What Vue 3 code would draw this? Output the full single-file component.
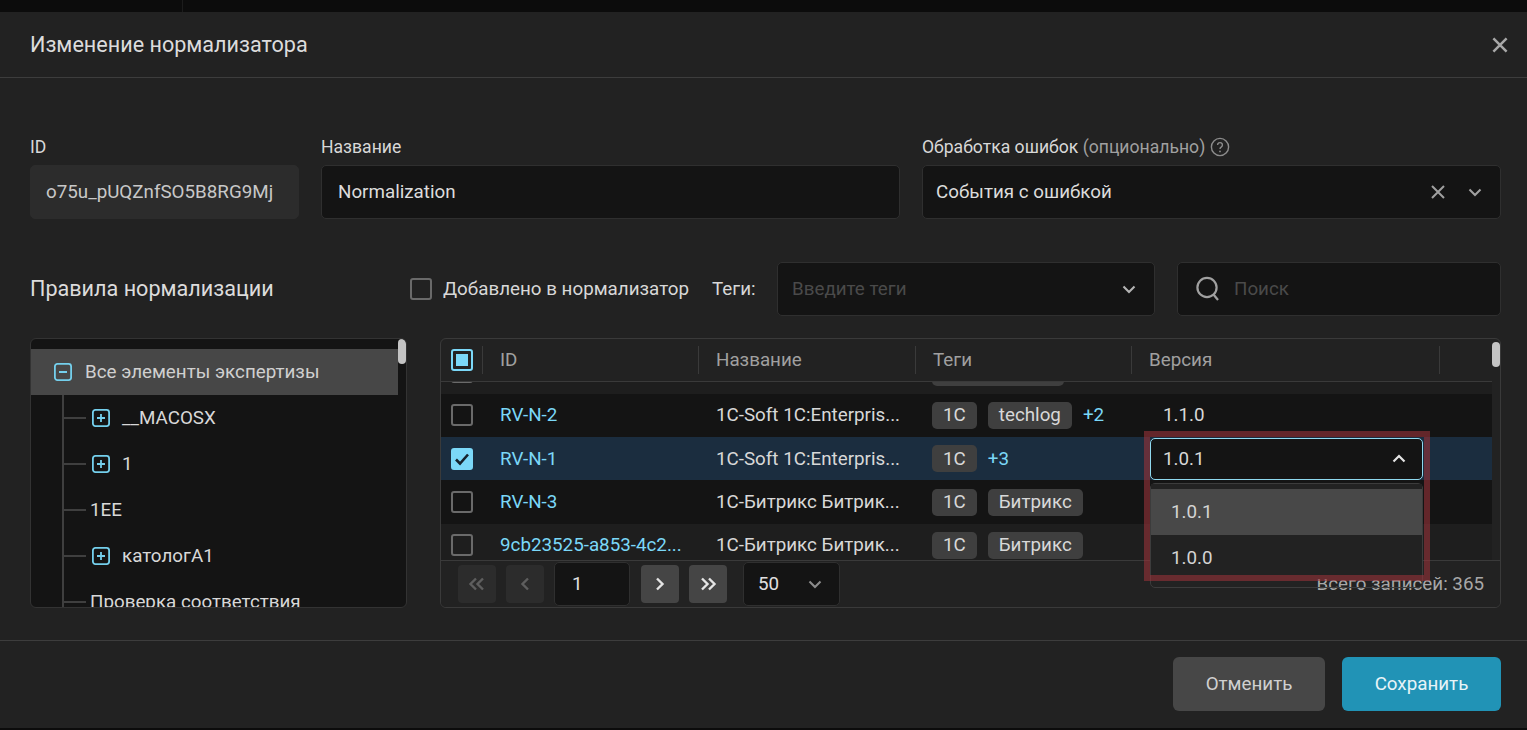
<script setup>
const treeItems = [
  { label: '__MACOSX', expandable: true },
  { label: '1', expandable: true },
  { label: '1EE', expandable: false },
  { label: 'катологА1', expandable: true },
  { label: 'Проверка соответствия', expandable: false }
]

// the first row is scrolled almost out of view, only the chip and checkbox bottoms show
const rows = [
  { key: 'scrolled', id: '', name: '', tags: [], more: '', version: '', clipped: true },
  { key: 'n2', id: 'RV-N-2', name: '1C-Soft 1C:Enterpris...', tags: ['1C', 'techlog'], more: '+2', version: '1.1.0' },
  { key: 'n1', id: 'RV-N-1', name: '1C-Soft 1C:Enterpris...', tags: ['1C'], more: '+3', version: '1.0.1', selected: true },
  { key: 'n3', id: 'RV-N-3', name: '1C-Битрикс Битрик...', tags: ['1C', 'Битрикс'], more: '', version: '' },
  { key: 'uuid', id: '9cb23525-a853-4c2...', name: '1C-Битрикс Битрик...', tags: ['1C', 'Битрикс'], more: '', version: '' }
]

const columns = ['ID', 'Название', 'Теги', 'Версия']
</script>

<template>
  <div class="page">
    <div class="top-strip"><span class="top-divider"></span></div>
    <div class="modal">
      <header class="modal-header">
        <h1 class="modal-title">Изменение нормализатора</h1>
        <svg class="close-icon" width="18" height="18" viewBox="0 0 18 18" fill="none">
          <path d="M2.4 2.4l13.2 13.2M15.6 2.4L2.4 15.6" stroke="#a8a8a8" stroke-width="2.5" />
        </svg>
      </header>

      <div class="modal-body">
        <div class="form-grid">
          <div class="field">
            <label class="field-label">ID</label>
            <div class="input input-readonly">o75u_pUQZnfSO5B8RG9Mj</div>
          </div>
          <div class="field">
            <label class="field-label">Название</label>
            <div class="input">Normalization</div>
          </div>
          <div class="field">
            <label class="field-label">
              Обработка ошибок <span class="optional">(опционально)</span>
              <svg class="help-icon" width="20" height="20" viewBox="0 0 20 20" fill="none">
                <circle cx="10" cy="10" r="8.6" stroke="#8c8c8c" stroke-width="1.4" />
                <path d="M7.6 8a2.4 2.4 0 1 1 3.6 2.1c-.8.5-1.2.9-1.2 1.8" stroke="#8c8c8c" stroke-width="1.4" />
                <circle cx="10" cy="14.4" r=".9" fill="#8c8c8c" />
              </svg>
            </label>
            <div class="input input-select">
              <span>События с ошибкой</span>
              <span class="select-icons">
                <svg width="14" height="14" viewBox="0 0 14 14" fill="none">
                  <path d="M1 1l12 12M13 1L1 13" stroke="#a0a0a0" stroke-width="2" />
                </svg>
                <svg width="14" height="10" viewBox="0 0 14 10" fill="none">
                  <path d="M1.5 2.5L7 8l5.5-5.5" stroke="#a0a0a0" stroke-width="2.1" />
                </svg>
              </span>
            </div>
          </div>
        </div>

        <div class="rules-bar">
          <h2 class="rules-title">Правила нормализации</h2>
          <span class="checkbox"></span>
          <span class="rules-check-label">Добавлено в нормализатор</span>
          <span class="rules-tags-label">Теги:</span>
          <div class="input input-select tags-select">
            <span class="placeholder">Введите теги</span>
            <svg width="14" height="10" viewBox="0 0 14 10" fill="none">
              <path d="M1.5 2.5L7 8l5.5-5.5" stroke="#b4b4b4" stroke-width="2.1" />
            </svg>
          </div>
          <div class="input search">
            <svg width="26" height="26" viewBox="0 0 26 26" fill="none">
              <circle cx="12" cy="11.5" r="9.6" stroke="#a0a0a0" stroke-width="2.2" />
              <path d="M18.5 18.5l4.5 5.5" stroke="#a0a0a0" stroke-width="2.2" />
            </svg>
            <span class="placeholder">Поиск</span>
          </div>
        </div>

        <div class="panels">
          <div class="tree">
            <div class="tree-scroll">
              <div class="tree-root">
                <span class="tree-toggle">
                  <svg width="18" height="18" viewBox="0 0 18 18" fill="none">
                    <rect x=".9" y=".9" width="16.2" height="16.2" rx="2.5" stroke="#74cfec" stroke-width="1.8" />
                    <path d="M5 9h8" stroke="#74cfec" stroke-width="1.8" />
                  </svg>
                </span>
                <span>Все элементы экспертизы</span>
              </div>
              <ul class="tree-list">
                <li v-for="item in treeItems" :key="item.label" class="tree-item">
                  <svg v-if="item.expandable" class="tree-plus" width="18" height="18" viewBox="0 0 18 18" fill="none">
                    <rect x=".9" y=".9" width="16.2" height="16.2" rx="2.5" stroke="#74cfec" stroke-width="1.8" />
                    <path d="M5 9h8M9 5v8" stroke="#74cfec" stroke-width="1.8" />
                  </svg>
                  <span>{{ item.label }}</span>
                </li>
              </ul>
            </div>
            <div class="scrollbar"><span class="thumb"></span></div>
          </div>

          <div class="table">
            <div class="table-main">
              <div class="table-head">
                <div class="head-check">
                  <span class="checkbox checkbox-mixed"><i></i></span>
                </div>
                <div v-for="col in columns" :key="col" class="head-cell">{{ col }}</div>
                <div class="head-cell"></div>
              </div>
              <div class="table-body">
                <div
                  v-for="row in rows"
                  :key="row.key"
                  class="table-row"
                  :class="{ 'row-selected': row.selected }"
                >
                  <div class="cell-check">
                    <span v-if="row.selected" class="checkbox checkbox-on">
                      <svg width="16" height="14" viewBox="0 0 16 14" fill="none">
                        <path d="M2 7.5l4 4 8-9" stroke="#16222c" stroke-width="2.6" />
                      </svg>
                    </span>
                    <span v-else class="checkbox"></span>
                  </div>
                  <div class="cell cell-id">{{ row.id }}</div>
                  <div class="cell">{{ row.name }}</div>
                  <div class="cell cell-tags">
                    <span v-if="row.clipped" class="tag tag-clipped"></span>
                    <span v-for="tag in row.tags" :key="tag" class="tag">{{ tag }}</span>
                    <span v-if="row.more" class="more">{{ row.more }}</span>
                  </div>
                  <div class="cell cell-version">
                    <div v-if="row.selected" class="version-select">
                      <span>{{ row.version }}</span>
                      <svg width="14" height="10" viewBox="0 0 14 10" fill="none">
                        <path d="M1.5 7.5L7 2l5.5 5.5" stroke="#e4e4e4" stroke-width="2.2" />
                      </svg>
                    </div>
                    <span v-else>{{ row.version }}</span>
                  </div>
                </div>
              </div>
            </div>
            <div class="scrollbar table-scrollbar"><span class="thumb"></span></div>

            <div class="table-footer">
              <button class="page-btn page-btn-off">
                <svg width="18" height="14" viewBox="0 0 18 14" fill="none">
                  <path d="M8 1.5L2.5 7 8 12.5M15 1.5L9.5 7l5.5 5.5" stroke="#5e5e5e" stroke-width="2.4" />
                </svg>
              </button>
              <button class="page-btn page-btn-off">
                <svg width="10" height="14" viewBox="0 0 10 14" fill="none">
                  <path d="M8 1.5L2.5 7 8 12.5" stroke="#5e5e5e" stroke-width="2.4" />
                </svg>
              </button>
              <div class="page-input">1</div>
              <button class="page-btn page-next">
                <svg width="10" height="14" viewBox="0 0 10 14" fill="none">
                  <path d="M2 1.5L7.5 7 2 12.5" stroke="#e4e4e4" stroke-width="2.4" />
                </svg>
              </button>
              <button class="page-btn">
                <svg width="18" height="14" viewBox="0 0 18 14" fill="none">
                  <path d="M3 1.5L8.5 7 3 12.5M10 1.5L15.5 7 10 12.5" stroke="#e4e4e4" stroke-width="2.4" />
                </svg>
              </button>
              <div class="page-size">
                <span>50</span>
                <svg width="14" height="10" viewBox="0 0 14 10" fill="none">
                  <path d="M1.5 2.5L7 8l5.5-5.5" stroke="#8c8c8c" stroke-width="2.1" />
                </svg>
              </div>
              <span class="total">Всего записей: 365</span>
            </div>

            <div class="version-menu">
              <div class="version-options">
                <div class="version-option option-active">1.0.1</div>
                <div class="version-option">1.0.0</div>
              </div>
            </div>
            <div class="highlight"></div>
          </div>
        </div>
      </div>

      <footer class="modal-footer">
        <button class="btn btn-cancel">Отменить</button>
        <button class="btn btn-save">Сохранить</button>
      </footer>
    </div>
    <div class="bottom-strip"></div>
  </div>
</template>

<style>
html,
body {
  margin: 0;
  background: #0c0c0c;
}
</style>

<style scoped>
.page {
  display: flex;
  flex-direction: column;
  width: 1527px;
  height: 730px;
  overflow: hidden;
  font-family: Roboto, "Liberation Sans", sans-serif;
  font-size: 18.8px;
  color: #e0e0e0;
  background: #0c0c0c;
}

.top-strip {
  height: 12px;
  padding-left: 182px;
  flex-shrink: 0;
}

.top-divider {
  display: block;
  width: 1px;
  height: 12px;
  background: #1c1c1c;
}

.bottom-strip {
  height: 2px;
  flex-shrink: 0;
}

.modal {
  flex: 1;
  display: flex;
  flex-direction: column;
  background: #222222;
}

.modal-header {
  display: flex;
  align-items: center;
  justify-content: space-between;
  height: 65px;
  padding: 0 18px 0 30px;
  border-bottom: 1px solid #3d3d3d;
  flex-shrink: 0;
}

.modal-title {
  margin: 0;
  font-size: 21.6px;
  font-weight: 400;
  color: #dcdcdc;
}

.modal-body {
  flex: 1;
  padding: 58px 26px 32px 30px;
}

.form-grid {
  display: grid;
  grid-template-columns: 269px 579px 579px;
  gap: 22px;
}

.field-label {
  display: block;
  height: 19px;
  padding-top: 1px;
  line-height: 20px;
  margin-bottom: 9px;
  font-size: 17.6px;
  color: #d8d8d8;
  white-space: nowrap;
}

.optional {
  color: #a0a0a0;
}

.help-icon {
  margin-left: 5px;
  vertical-align: -4px;
}

.input {
  display: flex;
  align-items: center;
  box-sizing: border-box;
  height: 54px;
  padding: 0 16px;
  background: #141414;
  border: 1px solid #2f2f2f;
  border-radius: 5px;
  color: #dcdcdc;
}

.input-readonly {
  padding-left: 15px;
  background: #2c2c2c;
  border-color: #2c2c2c;
  color: #c8c8c8;
  white-space: nowrap;
}

.input-select {
  justify-content: space-between;
  padding-left: 13px;
  padding-right: 18px;
}

.select-icons {
  display: flex;
  align-items: center;
  gap: 23px;
}

.rules-bar {
  display: flex;
  align-items: center;
  margin-top: 43px;
  height: 54px;
}

.rules-title {
  width: 380px;
  margin: 0 0 2px;
  font-size: 21.6px;
  font-weight: 400;
  color: #dcdcdc;
  flex-shrink: 0;
}

.checkbox {
  display: inline-flex;
  align-items: center;
  justify-content: center;
  box-sizing: border-box;
  width: 22px;
  height: 22px;
  border: 2px solid #6a6a6a;
  border-radius: 3px;
  flex-shrink: 0;
}

.checkbox-on {
  background: #7bd8f8;
  border-color: #7bd8f8;
}

.checkbox-mixed {
  border-color: #7bd8f8;
}

.checkbox-mixed i {
  display: block;
  width: 12px;
  height: 12px;
  background: #7bd8f8;
}

.rules-check-label {
  width: 247px;
  margin-left: 11px;
  white-space: nowrap;
  color: #d8d8d8;
}

.rules-tags-label {
  width: 44px;
  margin-left: 22px;
  margin-right: 21px;
  color: #d8d8d8;
}

.tags-select {
  width: 378px;
  padding-left: 14px;
  padding-right: 18px;
}

.placeholder {
  color: #4a4a4a;
}

.search {
  width: 324px;
  margin-left: 22px;
  gap: 13px;
  padding-left: 17px;
}

.panels {
  display: flex;
  gap: 33px;
  margin-top: 22px;
  height: 270px;
}

.tree {
  display: flex;
  width: 377px;
  box-sizing: border-box;
  background: #141414;
  border: 1px solid #333333;
  border-radius: 6px;
  overflow: hidden;
}

.tree-scroll {
  flex: 1;
  padding-top: 10px;
  overflow: hidden;
}

.tree-root {
  display: flex;
  align-items: center;
  gap: 13px;
  height: 46px;
  padding-left: 23px;
  background: #474747;
  color: #d0d0d0;
}

.tree-toggle {
  display: flex;
}

.tree-list {
  list-style: none;
  margin: 0 0 0 31px;
  padding: 0;
  border-left: 2px solid #3f3f3f;
}

.tree-item {
  position: relative;
  display: flex;
  align-items: center;
  gap: 12px;
  height: 46px;
  padding-left: 26px;
  color: #d8d8d8;
  white-space: nowrap;
}

.tree-item::before {
  content: "";
  position: absolute;
  left: 0;
  top: 22px;
  width: 22px;
  height: 2px;
  background: #3f3f3f;
}

.tree-plus {
  margin-left: 2px;
}

.scrollbar {
  position: relative;
  width: 8px;
  flex-shrink: 0;
}

.thumb {
  position: absolute;
  top: 0;
  left: 0;
  width: 8px;
  height: 25px;
  border-radius: 4px;
  background: #c4c4c4;
}

.table {
  position: relative;
  display: grid;
  grid-template-columns: 1051px 8px;
  grid-template-rows: 221px 47px;
  width: 1061px;
  box-sizing: border-box;
  border: 1px solid #3a3a3a;
  border-radius: 6px;
  overflow: hidden;
}

.table-main {
  display: flex;
  flex-direction: column;
  min-height: 0;
  overflow: hidden;
}

.table-scrollbar .thumb {
  top: 3px;
}

.table-head,
.table-row {
  display: grid;
  grid-template-columns: 41px 216px 217px 216px 308px 53px;
}

.table-head {
  height: 43px;
  flex-shrink: 0;
  border-bottom: 1px solid #3a3a3a;
  box-sizing: border-box;
}

.head-check,
.cell-check {
  display: flex;
  align-items: center;
  padding-left: 10px;
}

.head-cell {
  display: flex;
  align-items: center;
  margin: 7px 0;
  padding-left: 17px;
  border-left: 1px solid #3a3a3a;
  color: #a0a0a0;
}

.table-body {
  flex: 1;
  overflow: hidden;
}

.table-row {
  height: 43.3px;
  background: #141414;
}

.table-row:first-child {
  margin-top: -31.5px;
}

.table-row:first-child,
.table-row:last-child {
  background: #1e1e1e;
}

.table-row.row-selected {
  background: #1b2d3f;
}

.cell {
  display: flex;
  align-items: center;
  padding-left: 18px;
  white-space: nowrap;
  color: #d8d8d8;
}

.cell-id {
  color: #7bd8f8;
}

.cell-tags {
  gap: 11px;
  padding-left: 17px;
}

.tag {
  display: inline-flex;
  align-items: center;
  height: 27px;
  padding: 0 11px;
  background: #3f3f3f;
  border-radius: 5px;
  color: #d8d8d8;
}

.tag-clipped {
  box-sizing: border-box;
  width: 132px;
}

.more {
  color: #7bd8f8;
}

.cell-version {
  padding-left: 32px;
}

.version-select {
  display: flex;
  align-items: center;
  justify-content: space-between;
  box-sizing: border-box;
  width: 273px;
  height: 42px;
  margin-left: -13px;
  padding: 0 16px 0 12px;
  background: #141414;
  border: 1px solid #8fd8ee;
  border-radius: 5px;
}

.table-footer {
  grid-column: 1 / 3;
  display: flex;
  align-items: center;
  padding: 0 16px 0 17px;
  border-top: 1px solid #3a3a3a;
  background: #222222;
}

.page-btn {
  display: flex;
  align-items: center;
  justify-content: center;
  width: 38px;
  height: 38px;
  margin-right: 10px;
  padding: 0;
  background: #454545;
  border: 0;
  border-radius: 4px;
}

.page-btn-off {
  background: #2c2c2c;
}

.page-next {
  margin-left: 1px;
}

.page-input {
  display: flex;
  align-items: center;
  box-sizing: border-box;
  width: 76px;
  height: 44px;
  margin-right: 10px;
  padding-left: 17px;
  background: #141414;
  border: 1px solid #2f2f2f;
  border-radius: 5px;
}

.page-size {
  display: flex;
  align-items: center;
  justify-content: space-between;
  box-sizing: border-box;
  width: 97px;
  height: 44px;
  margin-left: 6px;
  padding: 0 17px 0 14px;
  background: #141414;
  border: 1px solid #2f2f2f;
  border-radius: 5px;
}

.total {
  margin-left: auto;
  color: #a8a8a8;
  white-space: nowrap;
}

.version-menu {
  position: absolute;
  left: 709px;
  top: 144px;
  box-sizing: border-box;
  width: 273px;
  height: 105px;
  border: 1px solid #3c3c3c;
  border-radius: 5px;
}

.version-options {
  height: 90px;
  padding-top: 5px;
  background: #222222;
}

.version-option {
  display: flex;
  align-items: center;
  height: 46px;
  padding-left: 20px;
  color: #d4d4d4;
}

.option-active {
  background: #484848;
}

.highlight {
  position: absolute;
  left: 703px;
  top: 92px;
  box-sizing: border-box;
  width: 286px;
  height: 150px;
  border: 6px solid rgba(152, 50, 56, 0.6);
}

.modal-footer {
  display: flex;
  justify-content: flex-end;
  gap: 17px;
  padding: 16px 26px 17px;
  border-top: 1px solid #3d3d3d;
}

.btn {
  height: 54px;
  border: 0;
  border-radius: 6px;
  font-family: inherit;
  font-size: 18.8px;
}

.btn-cancel {
  width: 152px;
  background: #474747;
  color: #d0d0d0;
}

.btn-save {
  width: 159px;
  background: #2193b6;
  color: #e8f4f8;
}
</style>
